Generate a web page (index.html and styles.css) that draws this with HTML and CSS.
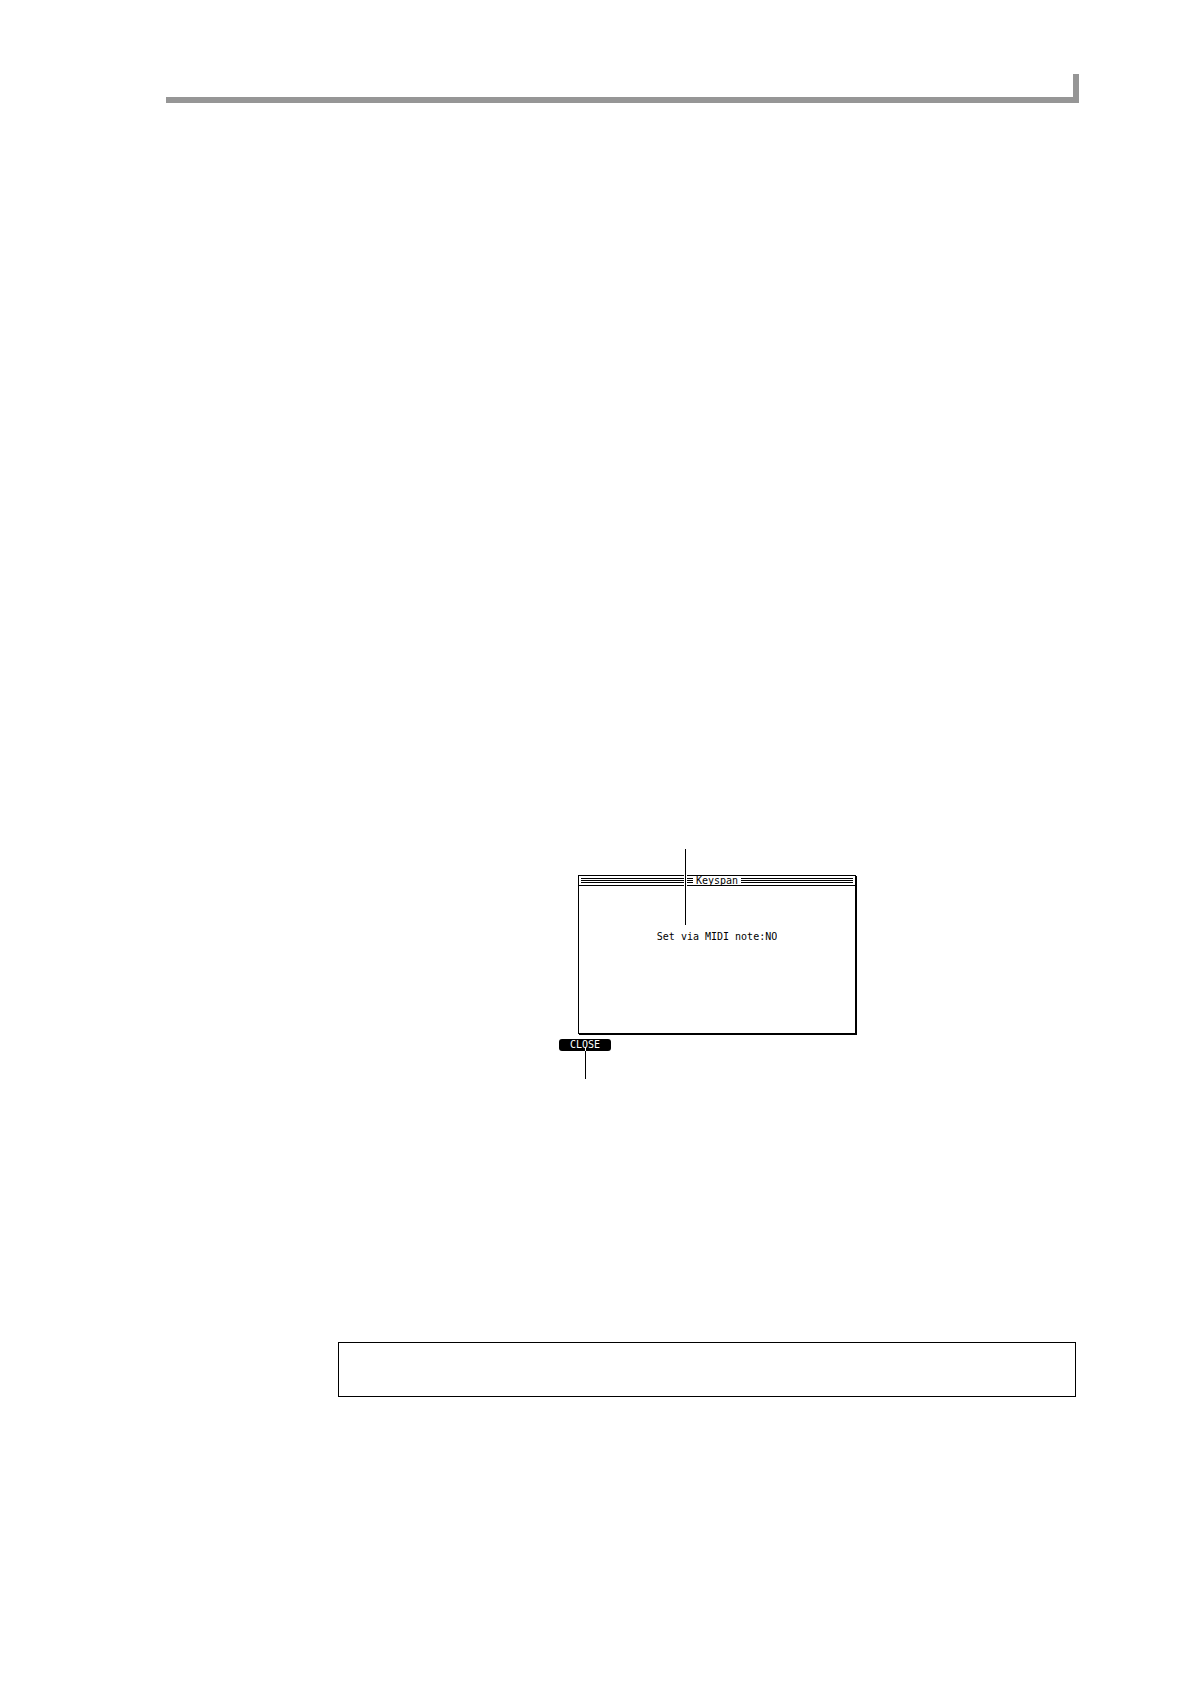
FILE: index.html
```
<!DOCTYPE html>
<html lang="en">
<head>
	<meta charset="utf-8">
	<title>Keyspan</title>
	<link rel="stylesheet" href="styles.css">
</head>
<body>
	<header class="page-header"></header>
	<main class="content">
		<figure class="screen">
			<section class="dialog">
				<h1 class="dialog-title"><span>Keyspan</span></h1>
				<div class="field">
					<label for="midi-note">Set via MIDI note:</label><input type="text" id="midi-note" value="NO">
				</div>
				<div class="callout callout-field"></div>
			</section>
			<div class="soft-keys">
				<button type="button" class="soft-key">CLOSE</button>
				<div class="callout callout-key"></div>
			</div>
		</figure>
		<aside class="note"></aside>
	</main>
</body>
</html>
```

FILE: styles.css
```
* {
	margin: 0;
	padding: 0;
	box-sizing: border-box;
}

body {
	background: #fff;
	color: #000;
	font: 10px/12px "DejaVu Sans Mono", monospace;
	padding: 74px 111px 0 166px;
}

.page-header {
	height: 29px;
	border-right: 6px solid #969696;
	border-bottom: 6px solid #969696;
}

.content {
	padding: 772px 3px 0 172px;
}

/* lcd screen */
.screen {
	width: 297px;
	margin-left: 221px;
}

.dialog {
	position: relative;
	margin-left: 19px;
	padding-bottom: 90px;
	border: 1px solid #000;
	box-shadow: 1px 1px 0 #000;
}

.dialog-title {
	display: flex;
	align-items: center;
	gap: 3px;
	height: 10px;
	padding: 0 2px;
	border-bottom: 1px solid #000;
	font-size: 10px;
	font-weight: normal;
	line-height: 10px;
}

/* stripes on both sides of the title */
.dialog-title::before,
.dialog-title::after {
	content: "";
	flex: 1;
	height: 5px;
	background: repeating-linear-gradient(#000 0 1px, #fff 1px 2px);
}

.field {
	display: flex;
	justify-content: center;
	padding-top: 45px;
}

.field input {
	width: 12px;
	height: 12px;
	border: 0;
	background: none;
	color: inherit;
	font: inherit;
}

.soft-keys {
	position: relative;
	width: 52px;
	margin-top: 5px;
}

.soft-key {
	display: block;
	width: 100%;
	height: 12px;
	border: 0;
	border-radius: 3px;
	background: #000;
	color: #fff;
	font: inherit;
}

/* leader lines */
.callout {
	position: absolute;
	width: 1px;
	background: #000;
}

.callout-field {
	left: 106px;
	top: -27px;
	height: 76px;
	box-shadow: -1px 0 0 #fff, 1px 0 0 #fff;
}

/* white where it crosses the key */
.callout-key {
	left: 26px;
	top: 8px;
	height: 32px;
	background: linear-gradient(#fff 4px, #000 4px);
}

.note {
	height: 55px;
	margin-top: 291px;
	border: 1px solid #000;
}
```
